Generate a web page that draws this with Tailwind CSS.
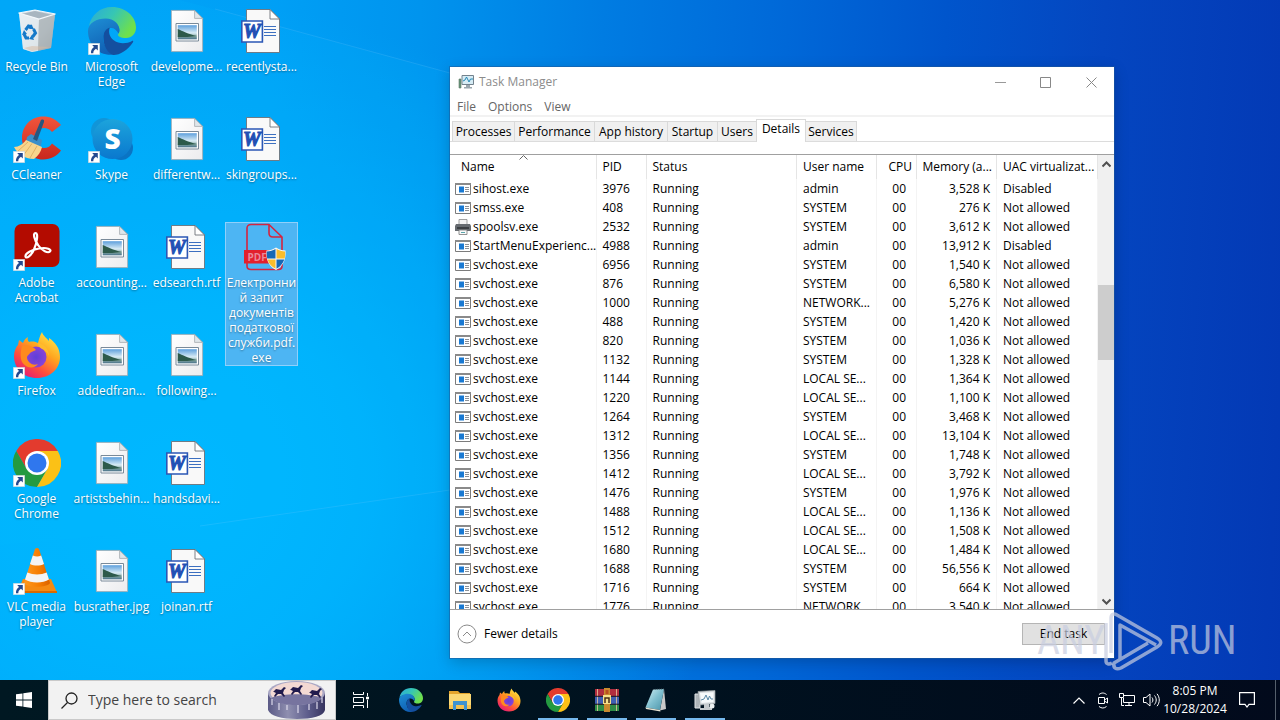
<!DOCTYPE html>
<html lang="en">
<head>
<meta charset="utf-8">
<title>Desktop</title>
<script src="https://cdn.jsdelivr.net/npm/@tailwindcss/browser@4"></script>
</head>
<body class="flex h-screen flex-col overflow-hidden font-['Open_Sans','Noto_Sans',sans-serif] text-xs text-black">

<svg class="absolute size-0" aria-hidden="true">
  <defs>
    <linearGradient id="binSide" x1="0" y1="0" x2="1" y2="1"><stop offset="0" stop-color="#dfe8ee"/><stop offset=".6" stop-color="#c3ced6"/><stop offset="1" stop-color="#9fa6aa"/></linearGradient>
    <linearGradient id="edgeTop" x1="0" y1="0" x2="1" y2=".5"><stop offset="0" stop-color="#2aa9dc"/><stop offset=".5" stop-color="#36c6b4"/><stop offset="1" stop-color="#6fe04b"/></linearGradient>
    <linearGradient id="edgeLeft" x1="0" y1="0" x2=".4" y2="1"><stop offset="0" stop-color="#1e8fd5"/><stop offset="1" stop-color="#1060b4"/></linearGradient>
    <linearGradient id="sky" x1="0" y1="0" x2="0" y2="1"><stop offset="0" stop-color="#5d9fdc"/><stop offset=".55" stop-color="#d9ecf5"/><stop offset=".8" stop-color="#7fa3a0"/><stop offset="1" stop-color="#47708b"/></linearGradient>
    <linearGradient id="paper" x1="0" y1="0" x2="1" y2="1"><stop offset="0" stop-color="#ffffff"/><stop offset="1" stop-color="#ececee"/></linearGradient>
    <linearGradient id="skypeBg" x1="0" y1="0" x2="0" y2="1"><stop offset="0" stop-color="#1ca4dc"/><stop offset="1" stop-color="#0a78ce"/></linearGradient>
    <linearGradient id="ccRed" x1="0" y1="0" x2="0" y2="1"><stop offset="0" stop-color="#f0553c"/><stop offset="1" stop-color="#c9271d"/></linearGradient>
    <linearGradient id="foxBody" x1=".9" y1="0" x2=".2" y2="1"><stop offset="0" stop-color="#fff14f"/><stop offset=".4" stop-color="#ffa51f"/><stop offset=".7" stop-color="#ff4f3c"/><stop offset="1" stop-color="#e2157c"/></linearGradient>
    <radialGradient id="foxCore"><stop offset="0" stop-color="#5f3fd8"/><stop offset="1" stop-color="#8a43d6"/></radialGradient>
    <linearGradient id="vlcCone" x1="0" x2="1"><stop offset="0" stop-color="#ff9a1f"/><stop offset=".6" stop-color="#f57c00"/><stop offset="1" stop-color="#d96200"/></linearGradient>
    <linearGradient id="cake" x1="0" x2="1"><stop offset="0" stop-color="#5b5a86"/><stop offset=".35" stop-color="#8f8fb0"/><stop offset=".7" stop-color="#5d5d8c"/><stop offset="1" stop-color="#37345f"/></linearGradient>
    <linearGradient id="note" x1="0" y1="0" x2="1" y2="1"><stop offset="0" stop-color="#d5f1f6"/><stop offset=".5" stop-color="#7fbfcf"/><stop offset="1" stop-color="#4a93a8"/></linearGradient>
  </defs>
</svg>

<svg class="hidden" aria-hidden="true">
  <symbol id="shortcut" viewBox="0 0 12 12"><path fill="#fff" stroke="#c5ccd4" stroke-width=".6" d="M.3.3h11.4v11.4H.3z"/><path fill="#24498f" d="M4.2 2h5.6v5.6L8 5.800C6 7 5.300 8.300 5.300 10.300H3C2.800 7.300 3.800 5.500 6 3.900z"/></symbol>

  <symbol id="recycle" viewBox="0 0 48 48">
    <path fill="url(#binSide)" d="M6 6l16-3 20 4-4 34-19 4-9-3z"/>
    <path fill="#a8b6c0" d="M8 7l14-3 18 4-14 4z"/>
    <path fill="#eef4f8" d="M6 6l20 6-1 32-6 1-9-3z" opacity=".65"/>
    <path fill="#a9b0b4" d="M26 12l16-5-4 34-13 3z" opacity=".7"/>
    <path fill="none" stroke="#f3f8fb" stroke-width="1.200" d="M5.500 6L22 3l20.500 4L26 12z"/>
    <path fill="#d8b9a0" d="M11 41l8-2 18 1-18 4z" opacity=".5"/>
    <g fill="none" stroke="#1479c9" stroke-width="3"><path d="M12.500 23l3-4 3.500 1"/><path d="M20.500 22l2 4-3 4"/><path d="M16 31h-3l-2-4"/></g>
    <path fill="#1479c9" d="M18 17l3 5-5 0zM21 33l-5-1 3-4zM9 28l2-5 3 4z"/>
  </symbol>

  <symbol id="edge" viewBox="0 0 48 48">
    <path fill="url(#edgeTop)" d="M1 19C3 8 12 0 24 0c14 0 24 10 24 20.500 0 6-4 10.500-10 10.500-5 0-8-1.500-8-3.200 0-1 1.500-2 1.500-4.600 0-4.500-4.500-9.500-12-9.500C11 13.700 4 15 1 19z"/>
    <path fill="url(#edgeLeft)" d="M0 24c0-8 9-12.500 17.500-12.500 9 0 14 6 14 11.500 0 1.500-.4 2.800-1 3.500-2-4-5-6-8.500-5.500-5 1-8 6-6.500 13 1 6 6 11 11.500 13.500C11 50 0 38 0 24z"/>
    <path fill="#144f9f" d="M15.300 30c0-5 3-9 6.500-9.300-2 5 .5 10 4 12.600 6 4.500 13.500 3.200 18.200.7 1-.5 1.600.3 1 1.200C40 43 32 48 25.500 48 19 46 15.300 38 15.300 30z"/>
  </symbol>

  <symbol id="picfile" viewBox="0 0 48 48">
    <path fill="url(#paper)" stroke="#a5a9ad" stroke-width=".8" d="M8.400 3.400h23.200l8 8v33.200H8.400z"/>
    <path fill="#dfe6ea" stroke="#a5a9ad" stroke-width=".8" d="M31.600 3.400v8h8z"/>
    <path fill="#fff" stroke="#7a8a99" stroke-width="1" d="M13 16.500h22.500V34H13z"/>
    <path fill="url(#sky)" d="M14.700 18.200h19.100v14.100H14.700z"/>
    <path fill="#2d5a4b" d="M14.700 22c5 2 10 5 19.100 7-6 1-13 1-19.100 1z"/>
  </symbol>

  <symbol id="rtf" viewBox="0 0 48 48">
    <path fill="#f9f9f9" stroke="#6d7278" stroke-width=".9" d="M8.500 2.500H32l9.500 9.500v33.500h-33z"/>
    <path fill="#fff" stroke="#6d7278" stroke-width=".9" d="M32 2.500V12h9.500z"/>
    <path stroke="#3c6fc0" stroke-width="1" d="M26 19.500h12M26 22.500h12M26 25.500h12M26 28.500h12"/>
    <path fill="#fff" stroke="#2b57b5" stroke-width="1.600" d="M3.800 14h20.600v21H3.800z"/>
    <text x="13.800" y="31" text-anchor="middle" font-family="Liberation Serif, serif" font-size="20" font-weight="700" font-style="italic" fill="#2250b4" stroke="#2250b4" stroke-width="1">W</text>
  </symbol>

  <symbol id="ccleaner" viewBox="0 0 48 48">
    <path fill="url(#ccRed)" d="M48 10C43 4 37 1.500 30 1.500 18 1.500 9 11 9 23s9 21.500 21 21.500c8 0 14-3.500 18-9l-9-7c-2 3-4.500 4.500-8 4.500-6 0-9.500-4.500-9.500-10S25 13 31 13c3 0 5.500 1 8 4z"/>
    <path fill="#3b8fc9" d="M14 22l4-3 11 6-1 6-6 1-9-5z"/>
    <path fill="#27567f" d="M28 5c2-1 3.500-.3 3 2l-7 19-4-2z"/>
    <path fill="#f8d58c" d="M13 25l16 7c-1 5-4 9-8 12-8 0-16-4-20-12 5 0 9-3 12-7z"/>
    <path fill="none" stroke="#d9a85a" stroke-width=".8" d="M15 27L5 36M19 28.500L10 41M24 31l-7 12"/>
  </symbol>

  <symbol id="skype" viewBox="0 0 48 48">
    <circle cx="16" cy="16" r="13" fill="#1195d8"/><circle cx="33" cy="33" r="12" fill="#0a74c4"/>
    <circle cx="24.500" cy="24" r="20" fill="url(#skypeBg)"/>
    <text x="24.500" y="34" text-anchor="middle" font-family="Open Sans, sans-serif" font-size="28" font-weight="800" fill="#fff">S</text>
  </symbol>

  <symbol id="acrobat" viewBox="0 0 48 48">
    <rect x="1.500" y="1" width="45" height="43" rx="7" fill="#b30b00"/>
    <path fill="none" stroke="#fff" stroke-width="2.200" stroke-linejoin="round" stroke-linecap="round" d="M22.500 10c-3 0-1 7 2.500 12 4 6 10 8.500 12 6.500s-3-4.500-11-3c-7 1.200-14 5-13.500 8s6-1 8.500-7c3-7 4.500-16.500 1.500-16.500z"/>
  </symbol>

  <symbol id="firefox" viewBox="0 0 48 48">
    <path fill="url(#foxBody)" d="M29 1c1 4 5 6 7 9 0-2 0-3 0-3 6 4 11 10 11 19 0 12-10 21-23 21S1 38 1 25c0-5 2-9 4-11l1-5 4 3c1-3 3-5 5-6-1 2 0 4 1 5 4-1 7 0 9 1 1-4 2-8 4-11z"/>
    <circle cx="23" cy="26" r="10.500" fill="url(#foxCore)"/>
    <path fill="#ff8a1f" d="M9 15c5-2 11 0 14 4-2 1-5 2-6 3-1 2-3 2-3 5 1 5 6 8 11 6-4 6-15 4-17-5-1-5 0-9 1-13z"/>
    <path fill="#ffbd2e" d="M25 12c6 1 11 6 11 13-2-4-4-6-7-7-2-1-4-3-4-6z" opacity=".9"/>
  </symbol>

  <symbol id="chrome" viewBox="0 0 48 48">
    <path fill="#e33b2e" d="M3.200 12A24 24 0 0 1 44.800 12H24L13.600 30z"/>
    <path fill="#249a41" d="M3.200 12A24 24 0 0 0 24 48l10.400-18H13.600z"/>
    <path fill="#fbc116" d="M44.800 12A24 24 0 0 1 24 48l10.400-18L24 12z"/>
    <circle cx="24" cy="24" r="12" fill="#fff"/><circle cx="24" cy="24" r="9.500" fill="#2f77ee"/>
  </symbol>

  <symbol id="vlc" viewBox="0 0 48 48">
    <path fill="#f58a12" d="M10 32h28l6 13.500H4z"/><path fill="#d96a00" d="M4 44h40v2H4z"/>
    <path fill="url(#vlcCone)" d="M22 2c1-1.500 3-1.500 4 0l11 34c-3 5-23 5-26 0z"/>
    <path fill="#f4f4f4" d="M19.800 8.500c3 1.200 5.500 1.200 8.400 0l2.800 8.500c-4 2-10 2-14 0zM14.300 25.500c6 2.500 13.500 2.500 19.400 0l2.300 7c-6 4-18 4-24 0z"/>
  </symbol>

  <symbol id="pdfexe" viewBox="0 0 48 48">
    <path fill="none" stroke="#d5243f" stroke-width="1.600" stroke-linejoin="round" d="M13 1.500h18L44 14v29c0 2-1.500 3.500-3.500 3.500H13c-2.500 0-4-1.500-4-3.500V5c0-2 1.500-3.500 4-3.500zM31 1.500V10c0 2.500 1.500 4 4 4h9"/>
    <path fill="#e3202c" d="M6 27h34v13.500H6z"/>
    <text x="9.500" y="37.500" font-family="Open Sans, sans-serif" font-size="10" font-weight="700" fill="#e9899a">PDF</text>
    <path fill="#f8f8f8" d="M38 24.500c3 2 6 3 9.500 3 .7 9-2.500 16-9.500 19.500-7-3.500-10.500-10.500-9.500-19.500 3.500 0 6.500-1 9.500-3z"/>
    <path fill="#1668b5" d="M37.500 26v9.500h-8.300c-.4-2.200-.5-4.500-.4-7 3.300 0 6-.9 8.700-2.500zM38.500 36.500h7.800c-1.300 4-4 7.200-7.800 9.300z"/>
    <path fill="#fbbd2b" d="M38.500 26c2.800 1.600 5.500 2.500 8.600 2.500.1 2.500 0 4.800-.4 7h-8.200zM37.500 36.500v9.300c-3.900-2-6.600-5.200-7.900-9.300z"/>
  </symbol>

  <symbol id="proc" viewBox="0 0 16 14"><path fill="#fff" stroke="#7c7c7c" d="M.5 1.500h15v11H.5z"/><path fill="#8a8a8a" d="M0 1h16v2H0z"/><path fill="#1979d2" d="M4 4.500h5v6H4z"/><path stroke="#8b9097" d="M10 5.500h4M10 7.500h4M10 9.500h4"/></symbol>
  <symbol id="printer" viewBox="0 0 16 16"><path fill="#f4f4f4" stroke="#8b8b8b" stroke-width=".8" d="M4 .5h8V6H4z"/><path fill="#666b70" d="M1 5h14l1 2v5H0V7z"/><path fill="#3b3f43" d="M2 8h12v2H2z"/><path fill="#fafafa" stroke="#777" stroke-width=".8" d="M4 11h8v4.500H4z"/><path stroke="#5aa5ab" d="M6 13.500h4"/></symbol>
  <symbol id="taskmgr" viewBox="0 0 16 16"><path fill="#d6ecf5" stroke="#73828d" d="M4 1.500h11.500v9H4z"/><path fill="none" stroke="#2689b5" d="M5 7l2-1 1.500-3L11 8l1.500-3H15"/><path fill="#9aa6ad" d="M8 11h4v2h2v1.500H6V13h2z"/><path fill="#679578" stroke="#60786a" stroke-width=".6" d="M1 5h2v9H1z"/></symbol>

  <symbol id="folder" viewBox="0 0 24 24"><path fill="#e5a52c" d="M1 3h9l2 2h10v4H1z"/><path fill="#fcd873" d="M1 6h22v15H1z"/><path fill="#f5c251" d="M1 17h22v4H1z"/><path fill="#3f93d1" d="M5 13h14v9h-3v-5H8v5H5z"/></symbol>
  <symbol id="winrar" viewBox="0 0 24 24"><path fill="#b02d3f" d="M0 1h24v7H0z"/><path fill="#3e5fb2" d="M0 8.500h24V16H0z"/><path fill="#2e8c45" d="M0 16.500h24V23H0z"/><path stroke="#e8c9a0" stroke-width=".8" d="M2.500 1v22M21.500 1v22"/><path stroke="#261b2b" d="M0 8.300h24M0 16.200h24"/><path fill="#c98a2f" d="M9 0h6v24H9z"/><path fill="#f6e08a" d="M8 7h8v9H8z"/><path fill="none" stroke="#4a2c17" stroke-width="1.500" d="M10 15v-5h4v5"/><path fill="#b84e21" d="M10.500 2h3v4h-3z"/></symbol>
  <symbol id="notepad" viewBox="0 0 24 24"><path fill="#c9c9c9" d="M20 1l2 20-6 1.500z"/><path fill="url(#note)" d="M9 1.500L20 1l-4 21L1.500 19.500z"/><path fill="#e9e4d2" d="M1.500 19.500L16 22l.5 1.500L2 21z"/><path stroke="#51626b" stroke-width=".8" stroke-dasharray="1 1" d="M9 1.500L20 1"/></symbol>
  <symbol id="monitor" viewBox="0 0 24 24"><path fill="#aeb4b8" stroke="#e2e5e7" d="M2 6h5v14H2z"/><path fill="#d7dbde" stroke="#9aa0a4" stroke-width=".7" d="M5 3.500l17-1v13L7 17z"/><path fill="#f7fafb" d="M7 5l13.500-.8v9.800L8.500 15z"/><path fill="none" stroke="#5b89a6" d="M8 12l3-1 2-4 2 5 1.500-4 1.500 3h2"/><path fill="#c7cbce" d="M11 16h5v3h3v3H7v-2h4z"/><circle cx="19" cy="18" r="2.500" fill="#eceff0"/></symbol>
</svg>

<main class="relative min-h-0 flex-1 bg-[radial-gradient(ellipse_560px_480px_at_180px_480px,#00b8ff_0%,#00b8ffcc_35%,#00b8ff00_100%),linear-gradient(93deg,#00a4f8_0%,#00a0f6_20%,#0094ee_32%,#007ce2_46%,#0068d8_60%,#0055cc_72%,#0446c0_84%,#0338b4_100%)]">
  <svg class="absolute inset-0 size-full" viewBox="0 0 1280 680" preserveAspectRatio="none" aria-hidden="true">
    <path fill="#00c0ff" fill-opacity=".12" d="M0 0h180l270 73v417L150 532 0 545z"/>
    <path fill="none" stroke="#7fd0ff" stroke-opacity=".18" d="M215 9l235 64M200 526l250-36"/>
  </svg>

  <ul id="icons" class="relative -ml-px grid w-max auto-cols-[75px] grid-flow-col grid-rows-[repeat(6,108px)]"></ul>

  <section aria-label="Task Manager" class="absolute top-[67px] left-[450px] flex h-[591px] w-[664px] flex-col bg-white shadow-[0_0_0_1px_#1f5a9a88,0_4px_14px_#00000033]">
    <header class="flex h-[30px] shrink-0 items-center pl-2 text-[#8c8c8c]">
      <svg class="mr-[5px] size-4"><use href="#taskmgr"/></svg>
      <h1 class="flex-1">Task Manager</h1>
      <button aria-label="Minimize" class="flex w-[46px] justify-center"><svg class="size-[11px]" viewBox="0 0 11 11" stroke="#999"><path d="M0 5.500h11"/></svg></button>
      <button aria-label="Maximize" class="flex w-[45px] justify-center"><svg class="size-[11px]" viewBox="0 0 11 11" fill="none" stroke="#888"><path d="M.5.5h10v10H.5z"/></svg></button>
      <button aria-label="Close" class="flex w-[46px] justify-center"><svg class="size-[11px]" viewBox="0 0 11 11" stroke="#888"><path d="M.5.5l10 10M10.500.5l-10 10"/></svg></button>
    </header>
    <nav class="flex h-5 shrink-0 items-center gap-3 border-b-2 border-[#f2f2f2] pt-0.5 pl-[7px] text-[#666]">
      <button>File</button><button>Options</button><button>View</button>
    </nav>
    <div role="tablist" class="flex h-[25px] shrink-0 items-end border-b border-[#dcdcdc] pl-0.5">
      <button role="tab" class="h-5 w-[63px] border border-b-0 border-[#d9d9d9] bg-[#f0f0f0]">Processes</button>
      <button role="tab" class="h-5 w-[80px] border-t border-r border-[#d9d9d9] bg-[#f0f0f0]">Performance</button>
      <button role="tab" class="h-5 w-[73px] border-t border-r border-[#d9d9d9] bg-[#f0f0f0]">App history</button>
      <button role="tab" class="h-5 w-[50px] border-t border-r border-[#d9d9d9] bg-[#f0f0f0]">Startup</button>
      <button role="tab" class="h-5 w-[38px] border-t border-[#d9d9d9] bg-[#f0f0f0]">Users</button>
      <button role="tab" aria-selected="true" class="-mb-px h-[23px] w-[50px] border border-b-0 border-[#d9d9d9] bg-white pb-1">Details</button>
      <button role="tab" class="h-5 w-[51px] border-t border-r border-[#d9d9d9] bg-[#f0f0f0]">Services</button>
    </div>

    <div class="mt-3 flex h-[456px] shrink-0 border-y border-[#a0a0a0]">
      <div class="min-w-0 flex-1 overflow-hidden">
        <table class="w-full table-fixed border-collapse">
          <colgroup><col class="w-[146px]"><col class="w-[50px]"><col><col class="w-[80px]"><col class="w-[40px]"><col class="w-[80px]"><col class="w-[101px]"></colgroup>
          <thead>
            <tr class="h-6 text-left">
              <th class="relative border-r border-[#e5e5e5] p-0 pl-[11px] font-normal">Name
                <svg class="absolute top-0 left-[69px] h-[5px] w-[9px]" viewBox="0 0 9 5" fill="none" stroke="#666"><path d="M.5 4.500l4-4 4 4"/></svg></th>
              <th class="border-r border-[#e5e5e5] p-0 pl-1.5 font-normal">PID</th>
              <th class="border-r border-[#e5e5e5] p-0 pl-1.5 font-normal">Status</th>
              <th class="border-r border-[#e5e5e5] p-0 pl-1.5 font-normal">User name</th>
              <th class="border-r border-[#e5e5e5] p-0 pr-1 text-right font-normal">CPU</th>
              <th class="border-r border-[#e5e5e5] p-0 pr-1 text-right font-normal whitespace-nowrap">Memory (a...</th>
              <th class="border-r border-[#e5e5e5] p-0 pl-1.5 font-normal whitespace-nowrap">UAC virtualizat...</th>
            </tr>
          </thead>
          <tbody id="rows"></tbody>
        </table>
      </div>
      <div class="flex w-4 flex-col items-center bg-[#f0f0f0]" aria-hidden="true">
        <svg class="mt-1.5 h-[7px] w-[9px]" viewBox="0 0 9 7" fill="none" stroke="#505050" stroke-width="2"><path d="M.5 5.500l4-4 4 4"/></svg>
        <div class="mt-[117px] h-[75px] w-full bg-[#cdcdcd]"></div>
        <svg class="mt-auto mb-1 h-[7px] w-[9px]" viewBox="0 0 9 7" fill="none" stroke="#505050" stroke-width="2"><path d="M.5 1.500l4 4 4-4"/></svg>
      </div>
    </div>

    <footer class="flex flex-1 items-center justify-between pr-[9px] pl-[7px]">
      <button class="flex items-center gap-[7px]"><svg class="size-5" viewBox="0 0 20 20" fill="none" stroke="#8a8a8a"><circle cx="10" cy="10" r="9"/><path d="M6 12l4-4 4 4"/></svg>Fewer details</button>
      <button class="h-[22px] w-[83px] border border-[#b5b5b5] bg-[#e1e1e1]">End task</button>
    </footer>
  </section>

  <div class="pointer-events-none absolute top-[608px] left-[1037px] flex h-[66px] items-center font-['Liberation_Sans_Narrow','Roboto_Condensed','Liberation_Sans',sans-serif] text-[40px] leading-none text-[#c8cde0]/70">
    <span class="w-[66px]">ANY</span>
    <svg class="h-[62px] w-[62px]" viewBox="0 0 62 62" fill="none" stroke="currentColor" stroke-width="3.500" stroke-linejoin="round"><path d="M8 43V8c0-4 3-5 6-3l40 23M17 50V15l36 20M54 28c5 3 5 6 0 9L18 58c-5 2-8 0-7-5l34-20"/><path d="M3 13v38c0 3 3 4 6 2"/></svg>
    <span class="ml-[3px]">RUN</span>
  </div>
</main>

<footer class="flex h-10 shrink-0 items-stretch bg-[linear-gradient(90deg,#001822,#00121f_50%,#020a1c)] text-white">
  <button aria-label="Start" class="flex w-12 items-center justify-center"><svg class="size-4" viewBox="0 0 16 16" fill="#fff"><path d="M0 2.300l6.500-.9v6.200H0zM7.300 1.300L16 0v7.600H7.300zM0 8.400h6.500v6.200L0 13.700zM7.300 8.400H16V16l-8.700-1.300z"/></svg></button>
  <label class="flex w-72 items-center border border-[#c9c9c9] bg-[#f2f2f2] pl-3">
    <svg class="mr-2.5 size-[17px] shrink-0" viewBox="0 0 17 17" fill="none" stroke="#222" stroke-width="1.300"><circle cx="10.500" cy="6.500" r="5.500"/><path d="M6.500 10.500L.5 16.500"/></svg>
    <input type="text" aria-label="Search" placeholder="Type here to search" class="min-w-0 flex-1 text-sm text-black outline-none placeholder:text-[#444]">
    <svg class="mr-2 h-[38px] w-[60px] shrink-0" viewBox="0 0 60 38" aria-hidden="true">
      <path fill="url(#cake)" d="M1 12v17c2 6 14 9 29 9s27-3 28-9V12z"/>
      <ellipse cx="29.500" cy="12" rx="28.500" ry="12" fill="#a9a7c4"/><ellipse cx="29.500" cy="12" rx="26" ry="11" fill="#f3d9d3"/>
      <path fill="#77749f" d="M4 17c12-5 38-5 51 0-5 5-14 7-25.500 7S9 22 4 17z"/>
      <path stroke="#dcd9ec" stroke-width="1.200" d="M5 18v6M12 22v7M20 24v5M31 24v8M42 23v6M50 21v7M55 17v5"/>
      <g fill="#211b4d"><path id="horse" d="M6 11l3-3 5 1 3-3 2 1-2 2-1 3 2 3-1 1-3-3-3 0-3 3-1-1 2-3-2-1z"/><use href="#horse" x="17" y="-2"/><use href="#horse" x="36" y="1"/></g>
    </svg>
  </label>
  <button aria-label="Task View" class="flex w-[50px] items-center justify-center"><svg class="size-4" viewBox="0 0 16 16" fill="none" stroke="#fff"><path d="M.5 0v2.500h10V0M.5 5.500h10v5H.5zM.5 16v-2.500h10V16M14.500 1v3M14.500 8v8"/><path fill="#fff" d="M13.500 5h2v2h-2z"/></svg></button>
  <button aria-label="Microsoft Edge" class="flex w-[49px] items-center justify-center"><svg class="size-6"><use href="#edge"/></svg></button>
  <button aria-label="File Explorer" class="flex w-[49px] items-center justify-center"><svg class="size-6"><use href="#folder"/></svg></button>
  <button aria-label="Firefox" class="flex w-[49px] items-center justify-center"><svg class="size-6"><use href="#firefox"/></svg></button>
  <button aria-label="Chrome" class="flex w-[49px] flex-col items-center justify-end gap-1.5"><svg class="size-6"><use href="#chrome"/></svg><span class="h-0.5 w-10 bg-[#76b9ed]"></span></button>
  <button aria-label="WinRAR" class="flex w-[49px] flex-col items-center justify-end gap-1.5"><svg class="size-6"><use href="#winrar"/></svg><span class="h-0.5 w-10 bg-[#76b9ed]"></span></button>
  <button aria-label="Notepad" class="flex w-[49px] flex-col items-center justify-end gap-1.5"><svg class="size-6"><use href="#notepad"/></svg><span class="h-0.5 w-10 bg-[#76b9ed]"></span></button>
  <button aria-label="Task Manager" class="flex w-[49px] flex-col items-center justify-end gap-1.5"><svg class="size-6"><use href="#monitor"/></svg><span class="h-0.5 w-10 bg-[#76b9ed]"></span></button>
  <div class="ml-auto flex items-center">
    <button aria-label="Show hidden icons" class="flex w-6 justify-center"><svg class="h-[7px] w-3" viewBox="0 0 12 7" fill="none" stroke="#fff" stroke-width="1.200"><path d="M.5 6.500L6 1l5.500 5.500"/></svg></button>
    <button aria-label="Meet Now" class="flex w-6 justify-center"><svg class="h-[17px] w-3" viewBox="0 0 12 17" fill="none" stroke="#fff"><path d="M1.500 5.500h6v6h-6zM7.500 8l3-2v5l-3-2M2 2.500c2.500-2 5-2 7.500 0M2 14.500c2.500 2 5 2 7.500 0"/></svg></button>
    <button aria-label="Network" class="flex w-6 justify-center"><svg class="h-[14px] w-4" viewBox="0 0 16 14" fill="none" stroke="#fff"><path d="M5 2.500h10.500v7H4.500V5M10 9.500V13M6 12.500h7M.5 1v3.500h4V.5h-4zM2.500 4.500v8H5"/></svg></button>
    <button aria-label="Volume" class="flex w-6 justify-center"><svg class="h-[14px] w-[17px]" viewBox="0 0 17 14" fill="none" stroke="#fff"><path d="M.5 4.500h2.500l4-3.500v12L3 9.500H.5zM9 4.500c1.200 1.500 1.200 3.500 0 5M11.500 2.500c2.300 2.700 2.300 6.300 0 9M14 .8c3 3.700 3 8.700 0 12.400"/></svg></button>
    <div class="w-16 text-center leading-[18px]"><div>8:05 PM</div><div>10/28/2024</div></div>
    <button aria-label="Notifications" class="flex w-10 justify-center"><svg class="size-4" viewBox="0 0 16 16" fill="none" stroke="#fff" stroke-width="1.200"><path d="M.6.6h14.800v11.800H10L8 15l-2-2.600H.6z"/></svg></button>
    <span class="ml-2 h-10 w-[5px] border-l border-[#555f6b]"></span>
  </div>
</footer>

<script>
const icons = [
  ["recycle", "Recycle Bin"], ["ccleaner", "CCleaner", 1], ["acrobat", "Adobe Acrobat", 1], ["firefox", "Firefox", 1], ["chrome", "Google Chrome", 1], ["vlc", "VLC media player", 1],
  ["edge", "Microsoft Edge", 1], ["skype", "Skype", 1], ["picfile", "accounting..."], ["picfile", "addedfran..."], ["picfile", "artistsbehin..."], ["picfile", "busrather.jpg"],
  ["picfile", "developme..."], ["picfile", "differentw..."], ["rtf", "edsearch.rtf"], ["picfile", "following..."], ["rtf", "handsdavi..."], ["rtf", "joinan.rtf"],
  ["rtf", "recentlysta..."], ["rtf", "skingroups..."], ["pdfexe", "Електронни<br>й запит<br>документів<br>податкової<br>служби.pdf.<br>exe"],
];
document.getElementById("icons").innerHTML = icons.map(([id, label, link]) => `
  <li class="px-px pt-1.5">
    <button class="flex w-full flex-col items-center gap-1 border ${id === "pdfexe" ? "border-[#8fd0fb] bg-[#4db5f3]" : "border-transparent"}">
      <span class="relative block size-12">
        <svg class="size-12"><use href="#${id}"/></svg>
        ${link ? '<svg class="absolute bottom-0 left-0 size-3"><use href="#shortcut"/></svg>' : ""}
      </span>
      <span class="flex w-full justify-center leading-[15px] text-white [text-shadow:0_1px_2px_#00000066]"><span>${label}</span></span>
    </button>
  </li>`).join("");

const S = "SYSTEM", L = "LOCAL SE...", N = "NETWORK...", H = "svchost.exe";
const rows = [
  ["sihost.exe", 3976, "admin", "3,528"], ["smss.exe", 408, S, "276"], ["spoolsv.exe", 2532, S, "3,612"], ["StartMenuExperienc...", 4988, "admin", "13,912"],
  [H, 6956, S, "1,540"], [H, 876, S, "6,580"], [H, 1000, N, "5,276"], [H, 488, S, "1,420"], [H, 820, S, "1,036"], [H, 1132, S, "1,328"],
  [H, 1144, L, "1,364"], [H, 1220, L, "1,100"], [H, 1264, S, "3,468"], [H, 1312, L, "13,104"], [H, 1356, S, "1,748"], [H, 1412, L, "3,792"],
  [H, 1476, S, "1,976"], [H, 1488, L, "1,136"], [H, 1512, L, "1,508"], [H, 1680, L, "1,484"], [H, 1688, S, "56,556"], [H, 1716, S, "664"], [H, 1776, N, "3,540"],
];
document.getElementById("rows").innerHTML = rows.map(([name, pid, user, mem]) => `
  <tr class="h-[19px] leading-[19px] whitespace-nowrap">
    <td class="border-r border-[#f4f4f4] p-0 pl-[5px]"><div class="flex items-center gap-0.5">${name === "spoolsv.exe" ? '<svg class="size-4 shrink-0"><use href="#printer"/></svg>' : '<svg class="h-3.5 w-4 shrink-0"><use href="#proc"/></svg>'}${name}</div></td>
    <td class="border-r border-[#f4f4f4] p-0 pl-1.5">${pid}</td>
    <td class="border-r border-[#f4f4f4] p-0 pl-1.5">Running</td>
    <td class="border-r border-[#f4f4f4] p-0 pl-1.5">${user}</td>
    <td class="border-r border-[#f4f4f4] p-0 pr-2.5 text-right">00</td>
    <td class="border-r border-[#f4f4f4] p-0 pr-1.5 text-right">${mem} K</td>
    <td class="border-r border-[#f4f4f4] p-0 pl-1.5">${user === "admin" ? "Disabled" : "Not allowed"}</td>
  </tr>`).join("");
</script>
</body>
</html>
